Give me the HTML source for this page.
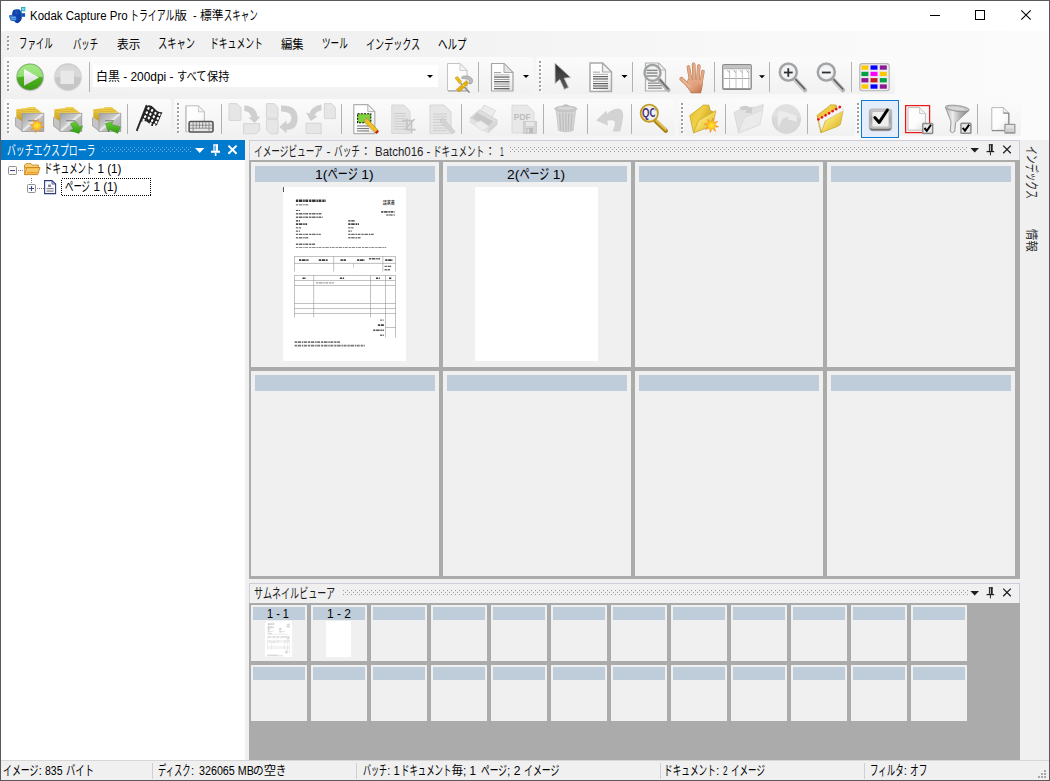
<!DOCTYPE html>
<html lang="ja"><head><meta charset="utf-8"><title>Kodak Capture Pro</title>
<style>
html,body{margin:0;padding:0}
body{width:1050px;height:781px;overflow:hidden;background:#f0f0f0;font-family:"Liberation Sans","Noto Sans CJK JP",sans-serif;font-size:12px;position:relative}
#win{position:absolute;left:0;top:0;width:1050px;height:781px;overflow:hidden;background:#f0f0f0}
#win div,#win svg{position:absolute}
.t{white-space:nowrap;height:40px;line-height:40px;transform-origin:0 0}
#frame{left:0;top:0;width:1048px;height:779px;border:1px solid #5a5a5e;pointer-events:none}
#title{left:1px;top:1px;width:1048px;height:30px;background:#fff}
#dock{left:1px;top:31px;width:1048px;height:109px;background:linear-gradient(to right,#f0f0f0 0,#f1f1f1 35%,#f9f9f9 75%,#fbfbfb 100%)}
.band{background:linear-gradient(to bottom,#fbfbfb 0,#f7f7f7 45%,#f1f1f1 100%);border-radius:3px}
.grip{width:3px;height:31px;background-image:linear-gradient(to bottom,#a0a0a0 0,#a0a0a0 2px,transparent 2px,transparent 4px),linear-gradient(to bottom,#fff 0,#fff 2px,transparent 2px,transparent 4px);background-size:2px 4px,2px 4px;background-position:0 0,1px 1px;background-repeat:repeat-y,repeat-y}
.sep{width:1px;height:29px;background:#b4b4b4}
.dd{width:0;height:0;border-left:3px solid transparent;border-right:3px solid transparent;border-top:3px solid #000}
#combo{left:93px;top:65px;width:345px;height:22px;background:#fff}
#lhead{left:1px;top:140px;width:244px;height:20px;background:#007acc}
#tree{left:1px;top:160px;width:244px;height:600px;background:#fff}
.phead{background:#f0f0f0;border:1px solid #cccedb;border-bottom:none;box-sizing:border-box}
.dots{height:5px;background-image:radial-gradient(circle at 0.5px 0.5px,#9a9a9a 0.6px,transparent 0.7px),radial-gradient(circle at 0.5px 0.5px,#9a9a9a 0.6px,transparent 0.7px);background-size:4px 4px,4px 4px;background-position:0 0,2px 2px}
#grid{left:249px;top:160px;width:771px;height:419px;background:#ababab}
.cell{width:188px;height:205px;background:#f0f0f0}
.cell i{position:absolute;left:4px;top:4px;width:180px;height:16px;background:#bfcddb}
#thumbs{left:249px;top:603px;width:771px;height:157px;background:#ababab}
.th{width:56px;height:56px;background:#f0f0f0}
.th i{position:absolute;left:2px;top:2px;width:52px;height:13px;background:#bfcddb}
#status{left:1px;top:760px;width:1048px;height:20px;background:#f0f0f0;border-top:1px solid #d7d7d7;box-sizing:border-box}
.ssep{width:1px;height:16px;top:763px;background:#d0d0d0}
.page{background:#fff}
.k{display:inline-block;transform-origin:0 50%;white-space:nowrap;position:static}
.dw{background-image:radial-gradient(circle at 0.5px 0.5px,#6fb4e6 0.6px,transparent 0.7px),radial-gradient(circle at 0.5px 0.5px,#6fb4e6 0.6px,transparent 0.7px)}

</style></head>
<body>
<div id="win">
<div id="title"></div>
<div id="dock"></div>
<!-- toolbar bands -->
<div class="band" style="left:4px;top:57px;width:529px;height:37px"></div>
<div class="band" style="left:536px;top:57px;width:359px;height:37px"></div>
<div class="band" style="left:4px;top:99px;width:167px;height:37px"></div>
<div class="band" style="left:174px;top:99px;width:501px;height:37px"></div>
<div class="band" style="left:678px;top:99px;width:177px;height:37px"></div>
<div class="band" style="left:857px;top:99px;width:164px;height:37px"></div>
<!-- grips -->
<div class="grip" style="left:7px;top:36px;height:15px"></div>
<div class="grip" style="left:7px;top:61px"></div>
<div class="grip" style="left:539px;top:61px"></div>
<div class="grip" style="left:7px;top:103px"></div>
<div class="grip" style="left:177px;top:103px"></div>
<div class="grip" style="left:681px;top:103px"></div>
<div class="grip" style="left:857px;top:103px"></div>
<div id="combo"></div>
<div class="dd" style="left:427px;top:75px"></div>
<!-- left panel -->
<div id="lhead"></div>
<div class="dots dw" style="left:102px;top:147px;width:90px"></div>
<div id="tree"></div>
<!-- image viewer -->
<div class="phead" style="left:249px;top:140px;width:771px;height:20px"></div>
<div class="dots" style="left:510px;top:147px;width:458px"></div>
<div id="grid">
<div class="cell" style="left:2px;top:2px"><i></i></div>
<div class="cell" style="left:194px;top:2px"><i></i></div>
<div class="cell" style="left:386px;top:2px"><i></i></div>
<div class="cell" style="left:578px;top:2px"><i></i></div>
<div class="cell" style="left:2px;top:211px"><i></i></div>
<div class="cell" style="left:194px;top:211px"><i></i></div>
<div class="cell" style="left:386px;top:211px"><i></i></div>
<div class="cell" style="left:578px;top:211px"><i></i></div>
</div>
<div class="page" style="left:283px;top:187px;width:123px;height:174px"></div>
<div class="page" style="left:475px;top:187px;width:123px;height:174px"></div>
<!-- thumbnails -->
<div class="phead" style="left:249px;top:583px;width:771px;height:20px"></div>
<div class="dots" style="left:343px;top:590px;width:625px"></div>
<div id="thumbs">
<div class="th" style="left:2px;top:2px"><i></i></div>
<div class="th" style="left:62px;top:2px"><i></i></div>
<div class="th" style="left:122px;top:2px"><i></i></div>
<div class="th" style="left:182px;top:2px"><i></i></div>
<div class="th" style="left:242px;top:2px"><i></i></div>
<div class="th" style="left:302px;top:2px"><i></i></div>
<div class="th" style="left:362px;top:2px"><i></i></div>
<div class="th" style="left:422px;top:2px"><i></i></div>
<div class="th" style="left:482px;top:2px"><i></i></div>
<div class="th" style="left:542px;top:2px"><i></i></div>
<div class="th" style="left:602px;top:2px"><i></i></div>
<div class="th" style="left:662px;top:2px"><i></i></div>
<div class="th" style="left:2px;top:62px"><i></i></div>
<div class="th" style="left:62px;top:62px"><i></i></div>
<div class="th" style="left:122px;top:62px"><i></i></div>
<div class="th" style="left:182px;top:62px"><i></i></div>
<div class="th" style="left:242px;top:62px"><i></i></div>
<div class="th" style="left:302px;top:62px"><i></i></div>
<div class="th" style="left:362px;top:62px"><i></i></div>
<div class="th" style="left:422px;top:62px"><i></i></div>
<div class="th" style="left:482px;top:62px"><i></i></div>
<div class="th" style="left:542px;top:62px"><i></i></div>
<div class="th" style="left:602px;top:62px"><i></i></div>
<div class="th" style="left:662px;top:62px"><i></i></div>
</div>
<div class="page" style="left:265px;top:621px;width:27px;height:36px"></div>
<div class="page" style="left:326px;top:621px;width:25px;height:36px"></div>
<!-- status -->
<div id="status"></div>
<div class="ssep" style="left:152px"></div>
<div class="ssep" style="left:356px"></div>
<div class="ssep" style="left:660px"></div>
<div class="ssep" style="left:864px"></div>
<svg id="ico" width="1050" height="781" viewBox="0 0 1050 781" style="left:0;top:0">
<defs>
<linearGradient id="gPage" x1="0" y1="0" x2="1" y2="1"><stop offset="0" stop-color="#fff"/><stop offset="0.6" stop-color="#fcfcfc"/><stop offset="1" stop-color="#dedede"/></linearGradient>
<linearGradient id="gPageD" x1="0" y1="0" x2="1" y2="1"><stop offset="0" stop-color="#ececec"/><stop offset="1" stop-color="#e0e0e0"/></linearGradient>
<linearGradient id="gGreenT" x1="0" y1="0" x2="0" y2="1"><stop offset="0" stop-color="#a6e88c"/><stop offset="1" stop-color="#8fe070"/></linearGradient>
<linearGradient id="gGreenB" x1="0" y1="0" x2="0" y2="1"><stop offset="0" stop-color="#5cc428"/><stop offset="0.5" stop-color="#4db41e"/><stop offset="1" stop-color="#3c9a14"/></linearGradient>
<linearGradient id="gTri" x1="0" y1="0" x2="0" y2="1"><stop offset="0" stop-color="#fff"/><stop offset="1" stop-color="#d4d4d4"/></linearGradient>
<linearGradient id="gStop" x1="0" y1="0" x2="0" y2="1"><stop offset="0" stop-color="#d9d9d9"/><stop offset="0.5" stop-color="#d2d2d2"/><stop offset="0.52" stop-color="#c2c2c2"/><stop offset="1" stop-color="#cbcbcb"/></linearGradient>
<linearGradient id="gCur" x1="0" y1="0" x2="0" y2="1"><stop offset="0" stop-color="#2e2e2e"/><stop offset="1" stop-color="#5c5c5c"/></linearGradient>
<linearGradient id="gFront" x1="0" y1="0" x2="1" y2="1"><stop offset="0" stop-color="#a0a0a0"/><stop offset="0.42" stop-color="#c8c8c8"/><stop offset="0.5" stop-color="#efefef"/><stop offset="0.56" stop-color="#c0c0c0"/><stop offset="1" stop-color="#a8a8a8"/></linearGradient>
<linearGradient id="gYel" x1="0" y1="0" x2="0" y2="1"><stop offset="0" stop-color="#f0cc48"/><stop offset="1" stop-color="#c89a18"/></linearGradient>
<linearGradient id="gFold" x1="0" y1="0" x2="1" y2="1"><stop offset="0" stop-color="#fbf2a8"/><stop offset="0.45" stop-color="#f4dc60"/><stop offset="1" stop-color="#d2a41a"/></linearGradient>
<linearGradient id="gGArr" x1="0" y1="0" x2="0" y2="1"><stop offset="0" stop-color="#6ad038"/><stop offset="1" stop-color="#2e9a10"/></linearGradient>
<radialGradient id="gStar"><stop offset="0" stop-color="#ffe838"/><stop offset="0.55" stop-color="#ffc218"/><stop offset="1" stop-color="#f07818"/></radialGradient>
<linearGradient id="gGrayBtn" x1="0" y1="0" x2="0" y2="1"><stop offset="0" stop-color="#c8c8c8"/><stop offset="0.5" stop-color="#a0a0a0"/><stop offset="1" stop-color="#c4c4c4"/></linearGradient>
<linearGradient id="gHand" x1="0" y1="0" x2="1" y2="1"><stop offset="0" stop-color="#e8b08c"/><stop offset="0.5" stop-color="#e0a07c"/><stop offset="1" stop-color="#c07048"/></linearGradient>
<linearGradient id="gFunnel" x1="0" y1="0" x2="1" y2="0"><stop offset="0" stop-color="#b4b4b4"/><stop offset="0.3" stop-color="#ececec"/><stop offset="0.6" stop-color="#b4b4b4"/><stop offset="1" stop-color="#848484"/></linearGradient>
<radialGradient id="gLens"><stop offset="0" stop-color="#f8f8f8"/><stop offset="0.7" stop-color="#f0f2f3"/><stop offset="1" stop-color="#d2e2ea"/></radialGradient>
<linearGradient id="gFoldB" x1="0" y1="0" x2="1" y2="0.6"><stop offset="0" stop-color="#e4bc30"/><stop offset="0.45" stop-color="#f0d048"/><stop offset="1" stop-color="#c49814"/></linearGradient>
<linearGradient id="gGold" x1="0" y1="0" x2="1" y2="1"><stop offset="0" stop-color="#e8c850"/><stop offset="1" stop-color="#a87c10"/></linearGradient>
</defs>
<g><path d="M13.4 10 Q16.5 8.6 19.6 9.6 Q21.6 11.4 21.8 14 L21.8 18.6 Q20.6 22.4 17.6 23.2 Q15.4 23 14.4 21.2 L10.8 20.6 Q9.4 18 9.2 15.6 L12 15 Q12 12 13.4 10 Z" fill="#0e41a8"/><path d="M9.2 15.4 Q12.4 14.8 15.6 16.4 L16.6 18.4 L15.6 20.8 L10.6 20.2 Q9.6 18 9.2 15.4 Z" fill="#2d74cb"/><rect x="10.6" y="16.8" width="5.4" height="0.9" fill="#86bcf0"/><rect x="10.4" y="18.8" width="5.8" height="0.9" fill="#74aeea"/><path d="M14.6 11 Q17 10 18.6 11.6 L17.8 14.6 L15.2 14.2 Z" fill="#1c52b8"/><rect x="21.6" y="13.2" width="3.5" height="3.6" fill="#1252b6"/><rect x="21.5" y="7.4" width="3.4" height="3.4" fill="#6fdcff" stroke="#27a5a9" stroke-width="0.9"/><path d="M21.5 11 L20.7 13" stroke="#27a5a9" stroke-width="0.8"/></g>
<rect x="930" y="15" width="10" height="1" fill="#000"/>
<rect x="975.5" y="10.5" width="9" height="9" fill="none" stroke="#000" stroke-width="1"/>
<path d="M1021.3 10.3 L1030.7 19.7 M1030.7 10.3 L1021.3 19.7" stroke="#000" stroke-width="1.1" fill="none"/>
<g><circle cx="30.2" cy="77.5" r="14" fill="#c4c4c4" opacity="0.5"/><circle cx="30" cy="77" r="13.6" fill="#9ca29c"/><circle cx="30" cy="77" r="12.9" fill="url(#gGreenB)"/><path d="M17.1 77.3 A12.9 12.9 0 0 1 42.9 77.3 Q30 75.2 17.1 77.3 Z" fill="url(#gGreenT)"/><path d="M24 69 L39 77.4 L24 85.8 Z" fill="url(#gTri)"/></g>
<g><circle cx="68" cy="77.2" r="14.2" fill="#dedede"/><circle cx="68" cy="77" r="13.2" fill="#c6c6c6"/><path d="M54.8 77.6 A13.2 13.2 0 0 1 81.2 77.6 Q68 75.4 54.8 77.6 Z" fill="#d8d8d8"/><rect x="60.4" y="70.6" width="13.6" height="13.4" fill="#e8e8e8"/></g>
<rect x="89" y="62" width="1" height="30" fill="#b2b2b2"/>
<path d="M447.5 63.5 L460.0 63.5 L467.0 70.5 L467.0 90.5 L447.5 90.5 Z" fill="url(#gPage)" stroke="#c4c4c4" stroke-width="1" stroke-linejoin="round"/>
<path d="M460.0 63.5 L460.0 70.5 L467.0 70.5 Z" fill="#f4f4f4" stroke="#c4c4c4" stroke-width="0.8" stroke-linejoin="round"/>
<path d="M448 91 L467.5 91" stroke="#a8a8a8" stroke-width="1.2"/>
<g><path d="M461.4 78.2 L462.6 76.2 L468 76 Q472.6 77.4 472.8 81.4 L471 84 L469 83.4 L469.6 80.6 L467.6 79 Z" fill="#bcbcbc" stroke="#8e8e8e" stroke-width="0.6"/><path d="M461 83.6 L469.2 92.2" stroke="#8c8c8c" stroke-width="1.5" stroke-linecap="round"/><path d="M455 78 L457.4 76.4 L461.6 81.6 L459.4 83.6 Z" fill="#ecbc0c" stroke="#b88a00" stroke-width="0.5"/><path d="M466.4 80.8 L468.6 83.2 L459.2 92 L456.6 89.4 Z" fill="#e4b208" stroke="#b08400" stroke-width="0.5"/><path d="M462.6 84.6 L464.6 86.6" stroke="#f8e070" stroke-width="1"/></g>
<rect x="478" y="62" width="1" height="30" fill="#b2b2b2"/>
<path d="M491.5 63.5 L504.0 63.5 L513.0 72.5 L513.0 91.0 L491.5 91.0 Z" fill="url(#gPage)" stroke="#a4a4a4" stroke-width="1.2" stroke-linejoin="round"/>
<path d="M504.0 63.5 L504.0 72.5 L513.0 72.5 Z" fill="#e4e4e4" stroke="#a4a4a4" stroke-width="0.96" stroke-linejoin="round"/>
<rect x="494" y="72" width="7" height="1.1" fill="#a4a4a4"/>
<rect x="494" y="74.3" width="15.5" height="1.1" fill="#bcbcbc"/>
<rect x="494" y="76.5" width="15.5" height="1.1" fill="#444"/>
<rect x="494" y="78.9" width="15.5" height="1.1" fill="#9a9a9a"/>
<rect x="494" y="81.2" width="15.5" height="1.1" fill="#444"/>
<rect x="494" y="83.5" width="15.5" height="1.1" fill="#9a9a9a"/>
<rect x="494" y="85.8" width="15.5" height="1.1" fill="#8c8c8c"/>
<rect x="494" y="88.2" width="15.5" height="1.1" fill="#444"/>
<path d="M523 75 L529 75 L526 78 Z" fill="#000"/>
<path d="M555 63 L555 83.6 L559.8 79.6 L564.3 89.4 L568.6 87.4 L564.2 78.2 L570.8 77.6 Z" fill="url(#gCur)" stroke="#c8c8c8" stroke-width="0.9" stroke-linejoin="round"/>
<path d="M590 63 L602.5 63 L611.5 72 L611.5 91.5 L590 91.5 Z" fill="url(#gPage)" stroke="#aaaaaa" stroke-width="1.5" stroke-linejoin="round"/>
<path d="M602.5 63 L602.5 72 L611.5 72 Z" fill="#f2f2f2" stroke="#aaaaaa" stroke-width="1.2000000000000002" stroke-linejoin="round"/>
<rect x="593" y="71.6" width="7" height="1.1" fill="#b0b0b0"/>
<rect x="593" y="73.8" width="15" height="1.1" fill="#b4b4b4"/>
<rect x="593" y="76.1" width="15" height="1.1" fill="#555"/>
<rect x="593" y="78.4" width="15" height="1.1" fill="#505050"/>
<rect x="593" y="80.8" width="15" height="1.1" fill="#a8a8a8"/>
<rect x="593" y="83.1" width="15" height="1.1" fill="#505050"/>
<rect x="593" y="85.4" width="15" height="1.1" fill="#555"/>
<rect x="593" y="87.7" width="15" height="1.1" fill="#505050"/>
<path d="M621.5 75 L627.5 75 L624.5 78 Z" fill="#000"/>
<rect x="632" y="62" width="1" height="30" fill="#b2b2b2"/>
<path d="M645.5 63 L658.5 63 L665.5 70 L665.5 91 L645.5 91 Z" fill="#f6f6f6" stroke="#b0b0b0" stroke-width="1.2" stroke-linejoin="round"/>
<path d="M658.5 63 L658.5 70 L665.5 70 Z" fill="#f4f4f4" stroke="#b0b0b0" stroke-width="0.96" stroke-linejoin="round"/>
<rect x="648" y="82.5" width="14" height="1.3" fill="#8c8c8c"/>
<rect x="648" y="85" width="14" height="1.3" fill="#8c8c8c"/>
<rect x="648" y="87.5" width="14" height="1.3" fill="#8c8c8c"/>
<path d="M659 79.6 L668.4 90" stroke="#b4b4b4" stroke-width="4.4" stroke-linecap="round"/>
<path d="M660 79.8 L668.2 89" stroke="#6a6a6a" stroke-width="1.5" stroke-linecap="round"/>
<circle cx="652.5" cy="72.8" r="9.6" fill="#d0d0d0" opacity="0.5"/>
<circle cx="652.5" cy="72.8" r="8" fill="url(#gLens)" stroke="#a0a0a0" stroke-width="2.2"/>
<rect x="646.5" y="69.6" width="11" height="1.5" fill="#8a8a8a"/>
<rect x="646.5" y="72.3" width="11" height="1.5" fill="#8a8a8a"/>
<rect x="646.5" y="75.2" width="11" height="1.5" fill="#8a8a8a"/>
<path d="M688.4 79.4 L702 80 Q702.8 84.6 700.6 92.6 L691.2 92.6 Q689 88.6 686.6 86 Z" fill="none" stroke="#b47654" stroke-width="1.1" stroke-linejoin="round"/>
<path d="M690.8 81 L688.4 67" stroke="#b47654" stroke-width="3.5" stroke-linecap="round"/>
<path d="M694.2 80 L693.6 64.2" stroke="#b47654" stroke-width="3.6" stroke-linecap="round"/>
<path d="M697.8 80.6 L698.8 66" stroke="#b47654" stroke-width="3.5" stroke-linecap="round"/>
<path d="M701 83 L703 71.4" stroke="#b47654" stroke-width="3.3" stroke-linecap="round"/>
<path d="M689.6 86.6 L681.4 78.8" stroke="#b47654" stroke-width="3.9" stroke-linecap="round"/>
<path d="M688.4 79.4 L702 80 Q702.8 84.6 700.6 92.6 L691.2 92.6 Q689 88.6 686.6 86 Z" fill="url(#gHand)"/>
<path d="M690.8 81 L688.4 67" stroke="#e4a884" stroke-width="2.6" stroke-linecap="round"/>
<path d="M694.2 80 L693.6 64.2" stroke="#e4a884" stroke-width="2.7" stroke-linecap="round"/>
<path d="M697.8 80.6 L698.8 66" stroke="#e4a884" stroke-width="2.6" stroke-linecap="round"/>
<path d="M701 83 L703 71.4" stroke="#e4a884" stroke-width="2.4" stroke-linecap="round"/>
<path d="M689.6 86.6 L681.4 78.8" stroke="#e4a884" stroke-width="3.0" stroke-linecap="round"/>
<path d="M689.6 86.6 L683 80" stroke="#eab692" stroke-width="1.6" stroke-linecap="round"/>
<rect x="714" y="62" width="1" height="30" fill="#b2b2b2"/>
<rect x="722.8" y="64.6" width="28.4" height="24.6" rx="1.2" fill="#fff" stroke="#8a8a8a" stroke-width="1.4"/>
<rect x="723.5" y="65.3" width="27" height="4" fill="#b4b4b4"/>
<rect x="723.5" y="66.4" width="27" height="1.2" fill="#cfcfcf"/>
<rect x="723.5" y="88" width="27" height="1" fill="#9a9a9a"/>
<rect x="724" y="78" width="26" height="0.9" fill="#a0a0a0"/>
<path d="M729.6 70 L729.6 88" stroke="#c4c4c4" stroke-width="1"/>
<path d="M727.2 70.3 L729.2 72.6" stroke="#9a9a9a" stroke-width="0.9"/>
<path d="M736 70 L736 88" stroke="#c4c4c4" stroke-width="1"/>
<path d="M733.6 70.3 L735.6 72.6" stroke="#9a9a9a" stroke-width="0.9"/>
<path d="M742.4 70 L742.4 88" stroke="#c4c4c4" stroke-width="1"/>
<path d="M740.0 70.3 L742.0 72.6" stroke="#9a9a9a" stroke-width="0.9"/>
<path d="M748.8 70 L748.8 88" stroke="#c4c4c4" stroke-width="1"/>
<path d="M746.4 70.3 L748.4 72.6" stroke="#9a9a9a" stroke-width="0.9"/>
<path d="M759 75.2 L765 75.2 L762 78.2 Z" fill="#000"/>
<rect x="769" y="62" width="1" height="30" fill="#b2b2b2"/>
<path d="M794.6999999999999 79.2 L804.9 90" stroke="#b6b6b6" stroke-width="4.6" stroke-linecap="round"/>
<path d="M795.6999999999999 79.4 L804.6999999999999 89" stroke="#5e5e5e" stroke-width="1.5" stroke-linecap="round"/>
<path d="M794.0999999999999 80.4 L803.0999999999999 90" stroke="#e4e4e4" stroke-width="0.9" stroke-linecap="round"/>
<circle cx="788.3" cy="72.1" r="10.1" fill="#d4d4d4" opacity="0.55"/>
<circle cx="788.3" cy="72.1" r="8.5" fill="url(#gLens)" stroke="#a2a2a2" stroke-width="2.3"/>
<path d="M783.9 72.5 L792.6999999999999 72.5" stroke="#2e2e2e" stroke-width="1.8"/>
<path d="M788.3 68.2 L788.3 76.8" stroke="#2e2e2e" stroke-width="1.8"/>
<path d="M832.6999999999999 79.2 L842.9 90" stroke="#b6b6b6" stroke-width="4.6" stroke-linecap="round"/>
<path d="M833.6999999999999 79.4 L842.6999999999999 89" stroke="#5e5e5e" stroke-width="1.5" stroke-linecap="round"/>
<path d="M832.0999999999999 80.4 L841.0999999999999 90" stroke="#e4e4e4" stroke-width="0.9" stroke-linecap="round"/>
<circle cx="826.3" cy="72.1" r="10.1" fill="#d4d4d4" opacity="0.55"/>
<circle cx="826.3" cy="72.1" r="8.5" fill="url(#gLens)" stroke="#a2a2a2" stroke-width="2.3"/>
<path d="M821.9 72.5 L830.6999999999999 72.5" stroke="#2e2e2e" stroke-width="1.8"/>
<rect x="851" y="62" width="1" height="30" fill="#b2b2b2"/>
<rect x="859.8" y="63.6" width="29.4" height="27.2" rx="2.5" fill="#ececec" stroke="#b2b2b2" stroke-width="1.1"/>
<rect x="861.4" y="65.4" width="7" height="4.3" fill="#ffc800"/>
<rect x="870.5" y="65.4" width="7" height="4.3" fill="#0000ff"/>
<rect x="879.8" y="65.4" width="7" height="4.3" fill="#8c1a96"/>
<rect x="861.4" y="71.8" width="7" height="4.3" fill="#00a048"/>
<rect x="870.5" y="71.8" width="7" height="4.3" fill="#ff00ff"/>
<rect x="879.8" y="71.8" width="7" height="4.3" fill="#ffc800"/>
<rect x="861.4" y="78.1" width="7" height="4.3" fill="#8c1a96"/>
<rect x="870.5" y="78.1" width="7" height="4.3" fill="#c41e1e"/>
<rect x="879.8" y="78.1" width="7" height="4.3" fill="#00a048"/>
<rect x="861.4" y="84.4" width="7" height="4.3" fill="#ffc800"/>
<rect x="870.5" y="84.4" width="7" height="4.3" fill="#0000ff"/>
<rect x="879.8" y="84.4" width="7" height="4.3" fill="#8c1a96"/>
<g transform="translate(15,107)"><path d="M0 10 L7 14 L7 24.5 L0 19 Z" fill="#acacac"/><path d="M1 10.3 L7 13.8 L7 23 L1 18.4 Z" fill="#c4c4c4"/><path d="M1.3 2.2 L12 1.2 L13 0 L19.5 0 L21 1.2 L27 6 L7.2 7 L7.2 14.5 L1.3 10.6 Z" fill="url(#gYel)"/><path d="M1.3 2.2 L12 1.2 L13 0 L19.5 0 L21 1.2 L27 6 L7.2 7 Z" fill="#f0d050"/><path d="M3 3.4 L21 2.2 M5 5 L24 4" stroke="#d4a828" stroke-width="0.7" fill="none"/><rect x="7" y="6.3" width="21.8" height="18.2" fill="url(#gFront)" stroke="#9c9c9c" stroke-width="0.8"/><rect x="13" y="13.3" width="9" height="1.3" fill="#787878"/><rect x="13" y="14.6" width="9" height="0.8" fill="#f0f0f0"/></g>
<polygon points="43.9,127.2 39.6,127.7 40.8,131.8 37.5,129.1 35.4,132.9 34.9,128.6 30.8,129.8 33.5,126.5 29.7,124.4 34.0,123.9 32.8,119.8 36.1,122.5 38.2,118.7 38.7,123.0 42.8,121.8 40.1,125.1" fill="url(#gStar)" stroke="#f08820" stroke-width="0.4"/>
<g transform="translate(53,107)"><path d="M0 10 L7 14 L7 24.5 L0 19 Z" fill="#acacac"/><path d="M1 10.3 L7 13.8 L7 23 L1 18.4 Z" fill="#c4c4c4"/><path d="M1.3 2.2 L12 1.2 L13 0 L19.5 0 L21 1.2 L27 6 L7.2 7 L7.2 14.5 L1.3 10.6 Z" fill="url(#gYel)"/><path d="M1.3 2.2 L12 1.2 L13 0 L19.5 0 L21 1.2 L27 6 L7.2 7 Z" fill="#f0d050"/><path d="M3 3.4 L21 2.2 M5 5 L24 4" stroke="#d4a828" stroke-width="0.7" fill="none"/><rect x="7" y="6.3" width="21.8" height="18.2" fill="url(#gFront)" stroke="#9c9c9c" stroke-width="0.8"/><rect x="13" y="13.3" width="9" height="1.3" fill="#787878"/><rect x="13" y="14.6" width="9" height="0.8" fill="#f0f0f0"/></g>
<path d="M70.5 123.5 L76 121.5 L79.5 127 L82.8 125.8 L79 133.5 L69.5 130.6 L73.4 129.2 Z" fill="url(#gGArr)" stroke="#2c8a10" stroke-width="0.4"/>
<g transform="translate(92,107)"><path d="M0 10 L7 14 L7 24.5 L0 19 Z" fill="#acacac"/><path d="M1 10.3 L7 13.8 L7 23 L1 18.4 Z" fill="#c4c4c4"/><path d="M1.3 2.2 L12 1.2 L13 0 L19.5 0 L21 1.2 L27 6 L7.2 7 L7.2 14.5 L1.3 10.6 Z" fill="url(#gYel)"/><path d="M1.3 2.2 L12 1.2 L13 0 L19.5 0 L21 1.2 L27 6 L7.2 7 Z" fill="#f0d050"/><path d="M3 3.4 L21 2.2 M5 5 L24 4" stroke="#d4a828" stroke-width="0.7" fill="none"/><rect x="7" y="6.3" width="21.8" height="18.2" fill="url(#gFront)" stroke="#9c9c9c" stroke-width="0.8"/><rect x="13" y="13.3" width="9" height="1.3" fill="#787878"/><rect x="13" y="14.6" width="9" height="0.8" fill="#f0f0f0"/></g>
<path d="M105.4 123.6 L113.2 121.6 L111.6 124.4 L120.4 127 L117.6 133.4 L110.2 129.4 L108.4 132 Z" fill="url(#gGArr)" stroke="#2c8a10" stroke-width="0.4"/>
<rect x="127" y="104" width="1" height="30" fill="#b2b2b2"/>
<path d="M146.4 105.8 L137 130.2" stroke="#2a2a2a" stroke-width="1.9" stroke-linecap="round"/>
<path d="M146.4 106.2 Q150.6 103.8 154 108 Q157.6 112.6 162.4 112.2 L157 125 Q152.6 127.8 149 123.4 Q145.4 119.4 140.6 122 Z" fill="#262626"/>
<ellipse cx="148.4" cy="108.4" rx="1.15" ry="1.45" transform="rotate(25 148.4 108.4)" fill="#fff"/>
<ellipse cx="152" cy="110.4" rx="1.15" ry="1.45" transform="rotate(25 152 110.4)" fill="#fff"/>
<ellipse cx="155.4" cy="113.2" rx="1.15" ry="1.45" transform="rotate(25 155.4 113.2)" fill="#fff"/>
<ellipse cx="159.4" cy="114.6" rx="1.15" ry="1.45" transform="rotate(25 159.4 114.6)" fill="#fff"/>
<ellipse cx="146.8" cy="112.6" rx="1.15" ry="1.45" transform="rotate(25 146.8 112.6)" fill="#fff"/>
<ellipse cx="150.4" cy="114.2" rx="1.15" ry="1.45" transform="rotate(25 150.4 114.2)" fill="#fff"/>
<ellipse cx="153.8" cy="116.8" rx="1.15" ry="1.45" transform="rotate(25 153.8 116.8)" fill="#fff"/>
<ellipse cx="157.8" cy="118.4" rx="1.15" ry="1.45" transform="rotate(25 157.8 118.4)" fill="#fff"/>
<ellipse cx="145.2" cy="116.6" rx="1.15" ry="1.45" transform="rotate(25 145.2 116.6)" fill="#fff"/>
<ellipse cx="148.8" cy="118" rx="1.15" ry="1.45" transform="rotate(25 148.8 118)" fill="#fff"/>
<ellipse cx="152.2" cy="120.6" rx="1.15" ry="1.45" transform="rotate(25 152.2 120.6)" fill="#fff"/>
<ellipse cx="156.2" cy="122.2" rx="1.15" ry="1.45" transform="rotate(25 156.2 122.2)" fill="#fff"/>
<ellipse cx="143.6" cy="120" rx="1.15" ry="1.45" transform="rotate(25 143.6 120)" fill="#fff"/>
<ellipse cx="150.6" cy="123.6" rx="1.15" ry="1.45" transform="rotate(25 150.6 123.6)" fill="#fff"/>
<ellipse cx="154.2" cy="125" rx="1.15" ry="1.45" transform="rotate(25 154.2 125)" fill="#fff"/>
<path d="M185.8 105.8 L198.4 105.8 L204.4 111.8 L204.4 131.8 L185.8 131.8 Z" fill="url(#gPage)" stroke="#bcbcbc" stroke-width="1" stroke-linejoin="round"/>
<path d="M198.4 105.8 L198.4 111.8 L204.4 111.8 Z" fill="#f4f4f4" stroke="#bcbcbc" stroke-width="0.8" stroke-linejoin="round"/>
<path d="M186 106.4 L186 131.6" stroke="#c8c8c8" stroke-width="1.4"/>
<rect x="188.3" y="120.7" width="25.5" height="12" rx="2.2" fill="#555"/>
<rect x="189.9" y="122.2" width="22.3" height="9" rx="0.8" fill="#e6e6e6"/>
<path d="M193.09 122.2 L193.09 128.2" stroke="#707070" stroke-width="0.7"/>
<path d="M196.28 122.2 L196.28 128.2" stroke="#707070" stroke-width="0.7"/>
<path d="M199.47 122.2 L199.47 128.2" stroke="#707070" stroke-width="0.7"/>
<path d="M202.66 122.2 L202.66 128.2" stroke="#707070" stroke-width="0.7"/>
<path d="M205.85 122.2 L205.85 128.2" stroke="#707070" stroke-width="0.7"/>
<path d="M209.04 122.2 L209.04 128.2" stroke="#707070" stroke-width="0.7"/>
<path d="M193.1 128.2 L193.1 131.2 M209 128.2 L209 131.2" stroke="#707070" stroke-width="0.7"/>
<path d="M189.9 125.2 L212.2 125.2 M189.9 128.2 L212.2 128.2" stroke="#707070" stroke-width="0.7"/>
<rect x="221" y="104" width="1" height="30" fill="#b2b2b2"/>
<path d="M229 103.6 L237 103.6 L241 107.6 L241 120.4 L229 120.4 Z" fill="#e6e6e6" stroke="#d6d6d6" stroke-width="1"/>
<path d="M244.4 105.2 Q256.4 106.4 257.6 116.6 L260.4 116.4 L254.6 123 L248.4 117.4 L251.4 117.2 Q250 111.6 244.2 111 Z" fill="#cfcfcf"/>
<path d="M243.6 123.6 L259.6 123.6 L259.6 130 L256 133.8 L243.6 133.8 Z" fill="#e6e6e6" stroke="#d6d6d6" stroke-width="1"/>
<path d="M266.4 103.6 L274 103.6 L278 107.6 L278 118.2 L266.4 118.2 Z" fill="#e6e6e6" stroke="#d6d6d6" stroke-width="1"/>
<path d="M266.4 119.4 L278 119.4 L278 133.8 L270.4 133.8 L266.4 130 Z" fill="#e6e6e6" stroke="#d6d6d6" stroke-width="1"/>
<path d="M281 105.4 Q297.6 105 297.6 118.4 Q297.6 129.6 286.6 129.8 L286.4 133.2 L279.4 127 L286.4 120.4 L286.6 124 Q291.4 123.4 291.4 117.6 Q291.4 111.6 281 111.6 Z" fill="#cfcfcf"/>
<path d="M324.4 103.6 L331.6 103.6 L335.4 107.4 L335.4 118.6 L324.4 118.6 Z" fill="#e6e6e6" stroke="#d6d6d6" stroke-width="1"/>
<path d="M321.4 104.6 Q311.4 106.4 309.4 113.6 L306 112.6 L310.6 121 L317.6 116.4 L314.6 115.2 Q316.6 111 321.6 110.6 Z" fill="#cfcfcf"/>
<path d="M306 123.2 L321.2 123.2 L321.2 133.6 L306 133.6 Z" fill="#e6e6e6" stroke="#d6d6d6" stroke-width="1"/>
<rect x="341" y="104" width="1" height="30" fill="#b2b2b2"/>
<path d="M353.8 104.6 L367.8 104.6 L374.8 111.6 L374.8 133.6 L353.8 133.6 Z" fill="url(#gPage)" stroke="#aeaeae" stroke-width="1.2" stroke-linejoin="round"/>
<path d="M367.8 104.6 L367.8 111.6 L374.8 111.6 Z" fill="#f4f4f4" stroke="#aeaeae" stroke-width="0.96" stroke-linejoin="round"/>
<rect x="357" y="125.4" width="12" height="1.1" fill="#7c7c7c"/>
<rect x="357" y="128" width="12" height="1.1" fill="#7c7c7c"/>
<rect x="357" y="130.4" width="12" height="1.1" fill="#7c7c7c"/>
<rect x="357.6" y="113.8" width="13.2" height="9" fill="#7fd03c" stroke="#111" stroke-width="1.1" stroke-dasharray="2 1.2"/>
<path d="M364.6 119.6 L367.4 118.8 L377.6 129.8 L375 132.6 L365 122.6 Z" fill="#f0c020" stroke="#9c7a10" stroke-width="0.5"/>
<path d="M364.4 119.4 L367 119.2 L365.4 122.2 Z" fill="#e8a088"/>
<path d="M375 132.6 L377.6 129.8 L379 131.4 L376.6 134 Z" fill="#c82020"/>
<path d="M391.8 105 L404 105 L410 111 L410 133.4 L391.8 133.4 Z" fill="#e4e4e4" stroke="#d8d8d8" stroke-width="1"/>
<rect x="394" y="113" width="12" height="1" fill="#cdcdcd"/>
<rect x="394" y="115.6" width="12" height="1" fill="#cdcdcd"/>
<rect x="394" y="118.2" width="12" height="1" fill="#cdcdcd"/>
<rect x="394" y="120.8" width="12" height="1" fill="#cdcdcd"/>
<rect x="394" y="123.4" width="12" height="1" fill="#cdcdcd"/>
<rect x="394" y="126" width="12" height="1" fill="#cdcdcd"/>
<rect x="394" y="128.6" width="12" height="1" fill="#cdcdcd"/>
<path d="M402.6 120.6 L411.6 120.6 L411.6 133.6 M407 118.6 L407 129.6 L415.6 129.6 M414.6 119 L404.6 129.8" fill="none" stroke="#c4c4c4" stroke-width="1.6"/>
<path d="M430 105 L444 105 L451 112 L451 133.6 L430 133.6 Z" fill="#e6e6e6" stroke="#d6d6d6" stroke-width="1"/>
<rect x="433" y="113.6" width="14" height="1" fill="#cdcdcd"/>
<rect x="433" y="116.4" width="14" height="1" fill="#cdcdcd"/>
<rect x="433" y="119.2" width="14" height="1" fill="#cdcdcd"/>
<rect x="433" y="122" width="14" height="1" fill="#cdcdcd"/>
<rect x="433" y="124.8" width="14" height="1" fill="#cdcdcd"/>
<rect x="433" y="127.6" width="14" height="1" fill="#cdcdcd"/>
<rect x="433" y="130.2" width="14" height="1" fill="#cdcdcd"/>
<path d="M440.2 119.4 L443.4 118.4 L455 131.6 L452.6 134 L441 122.6 Z" fill="#d4d4d4" stroke="#c0c0c0" stroke-width="0.6"/>
<rect x="461" y="104" width="1" height="30" fill="#b2b2b2"/>
<path d="M484 105 L495.6 110.6 L491 118.6 L479.6 112.6 Z" fill="#ececec" stroke="#d6d6d6" stroke-width="0.8"/>
<path d="M470.4 117.6 L479.6 109.8 L497.4 120.2 L489 129.2 Z" fill="#dedede" stroke="#cfcfcf" stroke-width="0.8"/>
<path d="M477 112.4 L493.4 121.6 L487.6 127.6 L472.4 118 Z" fill="#c8c8c8"/>
<path d="M470.4 117.6 L489 129.2 L488.4 133 L470.2 122.4 Z" fill="#e4e4e4" stroke="#d2d2d2" stroke-width="0.6"/>
<path d="M489 129.2 L497.4 120.2 L497.6 124.6 L488.4 133 Z" fill="#d6d6d6"/>
<path d="M473 123.4 L480.6 120.6 L489.6 126.6 L482 130.8 Z" fill="#ededed" stroke="#d4d4d4" stroke-width="0.6"/>
<path d="M512 105.2 L527 105.2 L534 112 L534 133 L512 133 Z" fill="#e8e8e8" stroke="#dadada" stroke-width="1"/>
<text x="513.8" y="120.2" font-family="Liberation Sans,sans-serif" font-weight="bold" font-size="8.8" fill="#bdbdbd" textLength="17" lengthAdjust="spacingAndGlyphs">PDF</text>
<rect x="523.4" y="121.4" width="13" height="12" fill="#d4d4d4" stroke="#c6c6c6" stroke-width="0.8"/>
<rect x="526" y="121.8" width="8" height="4.2" fill="#e8e8e8"/><rect x="526.4" y="128" width="6.6" height="5" fill="#bcbcbc"/><rect x="527.4" y="129" width="1.6" height="3.4" fill="#e6e6e6"/>
<rect x="543" y="104" width="1" height="30" fill="#b2b2b2"/>
<path d="M562.2 107 Q565.8 103.4 569.4 107" fill="none" stroke="#c0c0c0" stroke-width="1.6"/>
<path d="M556.2 110.4 Q565.8 114 575.6 110.4 L573.2 130.4 Q565.8 133.4 558.6 130.4 Z" fill="#d6d6d6" stroke="#c4c4c4" stroke-width="0.8"/>
<path d="M559.6 113.4 L560.7 130.4" stroke="#bebebe" stroke-width="1.4"/>
<path d="M562.8 113.4 L563.3 130.4" stroke="#bebebe" stroke-width="1.4"/>
<path d="M565.8 113.4 L565.8 130.4" stroke="#bebebe" stroke-width="1.4"/>
<path d="M568.8 113.4 L568.3 130.4" stroke="#bebebe" stroke-width="1.4"/>
<path d="M572 113.4 L570.9 130.4" stroke="#bebebe" stroke-width="1.4"/>
<ellipse cx="565.8" cy="108.8" rx="11.2" ry="2.8" fill="#cacaca" stroke="#bcbcbc" stroke-width="0.8"/>
<ellipse cx="565.8" cy="108.2" rx="8" ry="1.3" fill="#dadada"/>
<rect x="587" y="104" width="1" height="30" fill="#b2b2b2"/>
<path d="M596 120.6 L606.6 110.6 L607 114 Q612 108.8 618 108.6 Q623.6 109.6 623.2 116 Q622.6 124 620 131.4 L612.4 131.4 Q616 124 614.4 121 Q612 119.6 607.4 120.8 L608 125.4 Z" fill="#d3d3d3"/>
<rect x="631" y="104" width="1" height="30" fill="#b2b2b2"/>
<path d="M655.6 121 L665.8 130.8" stroke="#a27c12" stroke-width="4.2" stroke-linecap="round"/>
<path d="M655.8 120.4 L665.6 129.8" stroke="#d8b23a" stroke-width="2.2" stroke-linecap="round"/>
<path d="M656.4 119.8 L665.8 128.8" stroke="#f0dc86" stroke-width="0.8" stroke-linecap="round"/>
<circle cx="649.3" cy="113.2" r="8.6" fill="url(#gLens)" stroke="#c09820" stroke-width="1.9"/>
<circle cx="649.3" cy="113.2" r="7.5" fill="none" stroke="#ecd67c" stroke-width="0.7"/>
<text x="642" y="117" font-family="Liberation Sans,sans-serif" font-weight="bold" font-size="12" fill="#45307e" textLength="14.4" lengthAdjust="spacingAndGlyphs">QC</text>
<path d="M654.2 108.6 Q657 112.6 655.2 117.6" stroke="#e4eef4" stroke-width="1.6" fill="none" opacity="0.85"/>
<g transform="translate(689.5,105)"><path d="M0.2 10.6 L12 1.6 L13.6 0 L19.4 0.2 L20.8 5.6 L24.4 7 L22.4 20 L4 27.8 Z" fill="url(#gFoldB)" stroke="#b89414" stroke-width="0.6" stroke-linejoin="round"/><path d="M4 27.8 L9 15.6 L26.4 5.6 L23.6 19.6 L20 22 Z" fill="url(#gFold)" stroke="#c8a020" stroke-width="0.6" stroke-linejoin="round"/></g>
<polygon points="718.9,126.9 714.4,127.3 715.7,131.6 712.3,128.7 710.1,132.7 709.7,128.2 705.4,129.5 708.3,126.1 704.3,123.9 708.8,123.5 707.5,119.2 710.9,122.1 713.1,118.1 713.5,122.6 717.8,121.3 714.9,124.7" fill="url(#gStar)" stroke="#f08820" stroke-width="0.4"/>
<rect x="725" y="104" width="1" height="30" fill="#b2b2b2"/>
<path d="M734 112.6 L745.4 107 L748.4 109.4 L763.4 104.6 L759.6 124.6 L738.6 133 Z" fill="#e2e2e2" stroke="#d4d4d4" stroke-width="0.8"/>
<path d="M738.6 133 L744.6 117.2 L763 110 L759.6 124.6 Z" fill="#ebebeb" stroke="#d6d6d6" stroke-width="0.6"/>
<path d="M739.4 107.6 Q745.4 103.8 750.6 107.6 L752.6 106 L751.6 113.6 L744.6 112.4 L747 110.6 Q744.4 109 741.6 110.6 Z" fill="#cdcdcd"/>
<circle cx="786.4" cy="119.2" r="14.2" fill="#d8d8d8" stroke="#d0d0d0" stroke-width="0.8"/>
<path d="M772.6 118 A13.8 13.8 0 0 1 800.2 118 Q786 112 772.6 118 Z" fill="#e0e0e0"/>
<path d="M778.6 127.6 Q776.4 116 778.8 110.6 Q786 111.6 796.6 116 L796.8 121.4 Q789 119.6 787.6 119.4 L789.4 116.4 Q783 117.6 781.8 120 Q780.4 124 778.6 127.6 Z" fill="#ececec"/>
<rect x="807" y="104" width="1" height="30" fill="#b2b2b2"/>
<g transform="translate(816.8,104.8)"><path d="M0.2 10.6 L12 1.6 L13.6 0 L19.4 0.2 L20.8 5.6 L24.4 7 L22.4 20 L4 27.8 Z" fill="url(#gFoldB)" stroke="#b89414" stroke-width="0.6" stroke-linejoin="round"/><path d="M4 27.8 L9 15.6 L26.4 5.6 L23.6 19.6 L20 22 Z" fill="url(#gFold)" stroke="#c8a020" stroke-width="0.6" stroke-linejoin="round"/></g>
<path d="M818.6 119.6 L841.8 106.2 L843.4 110.4 L825 120.8 L821.6 130 Z" fill="#f4f4f4" stroke="#d8d8d8" stroke-width="0.5"/>
<path d="M818.4 119.4 L842.6 105.4" stroke="#e8141c" stroke-width="2.7" stroke-dasharray="0.1 4" stroke-linecap="round"/>
<rect x="861.5" y="100.5" width="37" height="37" fill="#e3eefa" stroke="#0f7bd6" stroke-width="1"/>
<rect x="868.8" y="108.4" width="23.4" height="22.8" rx="3.6" fill="#b4b4b4"/>
<rect x="870.4" y="126" width="20.2" height="4.4" rx="2" fill="#6e6e6e"/>
<rect x="870" y="109.4" width="21" height="19.4" rx="3" fill="url(#gGrayBtn)"/>
<rect x="872.4" y="112" width="16.2" height="14.4" rx="1" fill="#eeeeee"/>
<path d="M874.8 117.6 L879.2 122.4 L887.4 110" fill="none" stroke="#000" stroke-width="3" stroke-linecap="round" stroke-linejoin="round"/>
<path d="M908 107.6 L919.6 107.6 L925.6 113.6 L925.6 130.2 L908 130.2 Z" fill="url(#gPage)" stroke="#c0c0c0" stroke-width="1" stroke-linejoin="round"/>
<path d="M919.6 107.6 L919.6 113.6 L925.6 113.6 Z" fill="#f4f4f4" stroke="#c0c0c0" stroke-width="0.8" stroke-linejoin="round"/>
<rect x="905.6" y="105.6" width="24" height="27" fill="none" stroke="#e81a1a" stroke-width="1.25"/>
<rect x="922" y="122.8" width="11.4" height="11.4" rx="1.5" fill="#8c8c8c"/>
<rect x="923.5" y="124.3" width="8.4" height="8.4" fill="#e8e8e8"/>
<path d="M924.5 128.0 L926.8 130.8 L931 124.8" fill="none" stroke="#000" stroke-width="2"/>
<path d="M945.4 107.2 L951 121.6 L950.2 131.4 Q952.4 134 954.8 131.4 L955.6 122.6 L969.2 110.2 Z" fill="url(#gFunnel)" stroke="#8a8a8a" stroke-width="0.8" stroke-linejoin="round"/>
<ellipse cx="957.3" cy="108.4" rx="12" ry="2.9" transform="rotate(7 957.3 108.4)" fill="#c6c6c6" stroke="#8e8e8e" stroke-width="0.8"/>
<ellipse cx="956.6" cy="108.5" rx="8.6" ry="1.4" transform="rotate(7 957.3 108.4)" fill="#d8d8d8"/>
<rect x="960.2" y="122.6" width="11.4" height="11.4" rx="1.5" fill="#8c8c8c"/>
<rect x="961.7" y="124.1" width="8.4" height="8.4" fill="#e8e8e8"/>
<path d="M962.7 127.8 L965.0 130.6 L969.2 124.6" fill="none" stroke="#000" stroke-width="2"/>
<rect x="977" y="104" width="1" height="30" fill="#b2b2b2"/>
<path d="M991.8 107.6 L1003.3 107.6 L1008.8 113.1 L1008.8 130.4 L991.8 130.4 Z" fill="url(#gPage)" stroke="#b8b8b8" stroke-width="1" stroke-linejoin="round"/>
<path d="M1003.3 107.6 L1003.3 113.1 L1008.8 113.1 Z" fill="#f4f4f4" stroke="#b8b8b8" stroke-width="0.8" stroke-linejoin="round"/>
<path d="M1008.8 113 L1008.8 124 M1003.4 113.2 L1008.8 113.2" stroke="#8a8a8a" stroke-width="1.2" fill="none"/>
<path d="M992 130.6 L1004.4 130.6" stroke="#8c8c8c" stroke-width="1.3"/>
<rect x="1004.3" y="123.7" width="11.2" height="10" rx="1" fill="#9a9a9a"/><rect x="1005.6" y="125" width="8.6" height="7" fill="#e2e2e2"/><rect x="1005.6" y="128.6" width="8.6" height="3.4" fill="#d0d0d0"/>
<path d="M195 148 L204.4 148 L199.7 153 Z" fill="#fff"/>
<g fill="#fff"><rect x="213.4" y="144.4" width="1.2" height="6.6"/><rect x="213.4" y="144.4" width="4.6" height="1.2"/><rect x="215.6" y="144.4" width="2.4" height="6.6"/><rect x="211" y="150.7" width="9" height="2.1"/><rect x="214.8" y="152.6" width="1.6" height="3.4"/></g>
<path d="M228.4 145.6 L236.6 153.8 M236.6 145.6 L228.4 153.8" stroke="#fff" stroke-width="2" fill="none"/>
<path d="M970.4 148 L979 148 L974.7 152.4 Z" fill="#1e1e1e"/>
<g fill="#1e1e1e"><rect x="988.9" y="144.3" width="1" height="7"/><rect x="988.9" y="144.3" width="3.8" height="1"/><rect x="990.7" y="144.3" width="2" height="7"/><rect x="986.6" y="151.0" width="7.6" height="1.2"/><rect x="989.9" y="152.10000000000002" width="1" height="3.2"/></g>
<path d="M1003.2 145.6 L1010.8 153.2 M1010.8 145.6 L1003.2 153.2" stroke="#1e1e1e" stroke-width="1.25" fill="none"/>
<path d="M970.4 591 L979 591 L974.7 595.4 Z" fill="#1e1e1e"/>
<g fill="#1e1e1e"><rect x="988.9" y="587.3" width="1" height="7"/><rect x="988.9" y="587.3" width="3.8" height="1"/><rect x="990.7" y="587.3" width="2" height="7"/><rect x="986.6" y="594.0" width="7.6" height="1.2"/><rect x="989.9" y="595.0999999999999" width="1" height="3.2"/></g>
<path d="M1003.2 588.6 L1010.8 596.2 M1010.8 588.6 L1003.2 596.2" stroke="#1e1e1e" stroke-width="1.25" fill="none"/>
<rect x="8.5" y="166.5" width="8" height="8" rx="1" fill="#fafafa" stroke="#919191" stroke-width="1"/><rect x="10" y="170" width="5" height="1" fill="#3c4a8c"/>
<path d="M18 170.5 L24 170.5" stroke="#808080" stroke-width="1" stroke-dasharray="1 1" shape-rendering="crispEdges"/>
<path d="M31.5 178 L31.5 184" stroke="#808080" stroke-width="1" stroke-dasharray="1 1" shape-rendering="crispEdges"/>
<path d="M37 188.5 L44 188.5" stroke="#808080" stroke-width="1" stroke-dasharray="1 1" shape-rendering="crispEdges"/>
<rect x="27.5" y="184.5" width="8" height="8" rx="1" fill="#fafafa" stroke="#919191" stroke-width="1"/><rect x="29" y="188" width="5" height="1" fill="#3c4a8c"/><rect x="31" y="186" width="1" height="5" fill="#3c4a8c"/>
<path d="M24.6 165 L26 163.6 L31 163.6 L32 165 L38.4 165 L38.4 168 L24.6 168 Z" fill="#f6d078" stroke="#c4801c" stroke-width="0.8"/>
<path d="M24.4 174.6 L26.6 167.6 L40 167.6 L37.6 174.6 Z" fill="#f8c860" stroke="#cc7c14" stroke-width="0.9"/>
<path d="M24.6 174.4 L24.6 166" stroke="#c88a20" stroke-width="0.8"/>
<path d="M27 172.6 L37.4 172.6" stroke="#e8a030" stroke-width="1.3"/>
<path d="M44.6 180.6 L52 180.6 L55.6 184 L55.6 193.6 L44.6 193.6 Z" fill="#fbfbff" stroke="#2c3c84" stroke-width="1.1"/>
<path d="M52 180.6 L52 184 L55.6 184" fill="none" stroke="#2c3c84" stroke-width="0.8"/>
<rect x="46.6" y="188.2" width="7" height="1" fill="#6a6a6a"/><rect x="46.6" y="190.6" width="7" height="1" fill="#6a6a6a"/><rect x="48" y="184.6" width="3" height="2.4" fill="#8a8a9a"/>
<rect x="61.5" y="178.5" width="89" height="17" fill="none" stroke="#000" stroke-width="1" stroke-dasharray="1 1" shape-rendering="crispEdges"/>
<rect x="1044" y="770" width="2" height="2" fill="#a8a8a8"/>
<rect x="1041" y="773" width="2" height="2" fill="#a8a8a8"/>
<rect x="1044" y="773" width="2" height="2" fill="#a8a8a8"/>
<rect x="1038" y="776" width="2" height="2" fill="#a8a8a8"/>
<rect x="1041" y="776" width="2" height="2" fill="#a8a8a8"/>
<rect x="1044" y="776" width="2" height="2" fill="#a8a8a8"/>
<g transform="translate(0.00,0.00) scale(1.0000)" opacity="1.0">
<rect x="283" y="187" width="1" height="5" fill="#555"/>
<path d="M295.9 200.75 L325.9 200.75" stroke="#333" stroke-width="2.3" stroke-dasharray="2.3 0.7 3.5 0.8 1.5 0.6 2.9 0.9"/>
<path d="M295.9 204.80 L308.4 204.80" stroke="#999" stroke-width="1.6" stroke-dasharray="2.3 0.7 3.5 0.8 1.5 0.6 2.9 0.9"/>
<text x="382.8" y="204" font-family="Liberation Sans,Noto Sans CJK JP,sans-serif" font-weight="bold" font-size="4.2" fill="#333" textLength="12" lengthAdjust="spacingAndGlyphs">請求書</text>
<path d="M295.9 210.55 L300 210.55" stroke="#555" stroke-width="1.1" stroke-dasharray="2.3 0.7 3.5 0.8 1.5 0.6 2.9 0.9"/>
<path d="M295.9 213.80 L322 213.80" stroke="#666" stroke-width="1.6" stroke-dasharray="2.3 0.7 3.5 0.8 1.5 0.6 2.9 0.9"/>
<path d="M295.9 217.25 L322.9 217.25" stroke="#666" stroke-width="1.7" stroke-dasharray="2.3 0.7 3.5 0.8 1.5 0.6 2.9 0.9"/>
<path d="M381.1 211.90 L394.8 211.90" stroke="#555" stroke-width="1.8" stroke-dasharray="2.3 0.7 3.5 0.8 1.5 0.6 2.9 0.9"/>
<path d="M386.2 215.05 L394.8 215.05" stroke="#777" stroke-width="1.5" stroke-dasharray="2.3 0.7 3.5 0.8 1.5 0.6 2.9 0.9"/>
<path d="M295.9 220.95 L300 220.95" stroke="#333" stroke-width="1.3" stroke-dasharray="2.3 0.7 3.5 0.8 1.5 0.6 2.9 0.9"/>
<path d="M348.2 220.95 L354.6 220.95" stroke="#333" stroke-width="1.3" stroke-dasharray="2.3 0.7 3.5 0.8 1.5 0.6 2.9 0.9"/>
<path d="M295.9 224.05 L307.1 224.05" stroke="#444" stroke-width="1.7" stroke-dasharray="2.3 0.7 3.5 0.8 1.5 0.6 2.9 0.9"/>
<path d="M348.2 224.05 L359 224.05" stroke="#444" stroke-width="1.7" stroke-dasharray="2.3 0.7 3.5 0.8 1.5 0.6 2.9 0.9"/>
<path d="M295.9 227.75 L301 227.75" stroke="#888" stroke-width="1.5" stroke-dasharray="2.3 0.7 3.5 0.8 1.5 0.6 2.9 0.9"/>
<path d="M348.2 227.75 L353.5 227.75" stroke="#888" stroke-width="1.5" stroke-dasharray="2.3 0.7 3.5 0.8 1.5 0.6 2.9 0.9"/>
<path d="M295.9 231.10 L300 231.10" stroke="#666" stroke-width="1.2" stroke-dasharray="2.3 0.7 3.5 0.8 1.5 0.6 2.9 0.9"/>
<path d="M348.2 231.10 L352 231.10" stroke="#666" stroke-width="1.2" stroke-dasharray="2.3 0.7 3.5 0.8 1.5 0.6 2.9 0.9"/>
<path d="M295.9 234.40 L320.8 234.40" stroke="#666" stroke-width="1.2" stroke-dasharray="2.3 0.7 3.5 0.8 1.5 0.6 2.9 0.9"/>
<path d="M348.2 234.40 L374 234.40" stroke="#666" stroke-width="1.2" stroke-dasharray="2.3 0.7 3.5 0.8 1.5 0.6 2.9 0.9"/>
<path d="M295.9 237.75 L308.9 237.75" stroke="#777" stroke-width="1.3" stroke-dasharray="2.3 0.7 3.5 0.8 1.5 0.6 2.9 0.9"/>
<path d="M348.2 237.75 L361 237.75" stroke="#777" stroke-width="1.3" stroke-dasharray="2.3 0.7 3.5 0.8 1.5 0.6 2.9 0.9"/>
<path d="M295.9 244.30 L315 244.30" stroke="#666" stroke-width="1.4" stroke-dasharray="2.3 0.7 3.5 0.8 1.5 0.6 2.9 0.9"/>
<path d="M295.9 247.45 L386.2 247.45" stroke="#8a8a8a" stroke-width="1.1" stroke-dasharray="2.3 0.7 3.5 0.8 1.5 0.6 2.9 0.9"/>
<rect x="294.3" y="256.2" width="101.1" height="0.6" fill="#999999"/>
<rect x="294.3" y="262.9" width="101.1" height="0.7" fill="#a0a0a0"/>
<path d="M294.3 263.90 L294.90000000000003 263.90" stroke="#999999" stroke-width="15.4" stroke-dasharray="2.3 0.7 3.5 0.8 1.5 0.6 2.9 0.9"/>
<path d="M333.5 263.90 L334.1 263.90" stroke="#999999" stroke-width="15.4" stroke-dasharray="2.3 0.7 3.5 0.8 1.5 0.6 2.9 0.9"/>
<path d="M382.6 263.90 L383.20000000000005 263.90" stroke="#999999" stroke-width="15.4" stroke-dasharray="2.3 0.7 3.5 0.8 1.5 0.6 2.9 0.9"/>
<path d="M395.2 263.90 L395.8 263.90" stroke="#999999" stroke-width="15.4" stroke-dasharray="2.3 0.7 3.5 0.8 1.5 0.6 2.9 0.9"/>
<path d="M353.3 265.50 L353.9 265.50" stroke="#aaa" stroke-width="4.2" stroke-dasharray="2.3 0.7 3.5 0.8 1.5 0.6 2.9 0.9"/>
<path d="M299 260.05 L308.9 260.05" stroke="#3c3c3c" stroke-width="1.7" stroke-dasharray="2.3 0.7 3.5 0.8 1.5 0.6 2.9 0.9"/>
<path d="M318.8 260.05 L328 260.05" stroke="#3c3c3c" stroke-width="1.7" stroke-dasharray="2.3 0.7 3.5 0.8 1.5 0.6 2.9 0.9"/>
<path d="M340.5 260.05 L345.9 260.05" stroke="#3c3c3c" stroke-width="1.7" stroke-dasharray="2.3 0.7 3.5 0.8 1.5 0.6 2.9 0.9"/>
<path d="M357.1 260.05 L364.8 260.05" stroke="#3c3c3c" stroke-width="1.7" stroke-dasharray="2.3 0.7 3.5 0.8 1.5 0.6 2.9 0.9"/>
<path d="M385.2 260.05 L392.9 260.05" stroke="#3c3c3c" stroke-width="1.7" stroke-dasharray="2.3 0.7 3.5 0.8 1.5 0.6 2.9 0.9"/>
<path d="M368.9 258.80 L380.1 258.80" stroke="#555" stroke-width="1.6" stroke-dasharray="2.3 0.7 3.5 0.8 1.5 0.6 2.9 0.9"/>
<path d="M384.6 266.40 L392 266.40" stroke="#666" stroke-width="1.4" stroke-dasharray="2.3 0.7 3.5 0.8 1.5 0.6 2.9 0.9"/>
<path d="M384.6 269.85 L390 269.85" stroke="#666" stroke-width="1.5" stroke-dasharray="2.3 0.7 3.5 0.8 1.5 0.6 2.9 0.9"/>
<rect x="294.3" y="275.2" width="101.1" height="0.6" fill="#999999"/>
<rect x="294.3" y="280.3" width="101.1" height="0.6" fill="#999999"/>
<rect x="294.3" y="285.1" width="101.1" height="0.6" fill="#999999"/>
<rect x="294.3" y="303.2" width="101.1" height="0.6" fill="#999999"/>
<rect x="294.3" y="308.1" width="101.1" height="0.6" fill="#999999"/>
<rect x="294.3" y="313.2" width="101.1" height="0.6" fill="#999999"/>
<path d="M294.3 296.40 L294.90000000000003 296.40" stroke="#999999" stroke-width="42.4" stroke-dasharray="2.3 0.7 3.5 0.8 1.5 0.6 2.9 0.9"/>
<path d="M313.5 296.40 L314.1 296.40" stroke="#999999" stroke-width="42.4" stroke-dasharray="2.3 0.7 3.5 0.8 1.5 0.6 2.9 0.9"/>
<path d="M370.1 296.40 L370.70000000000005 296.40" stroke="#999999" stroke-width="42.4" stroke-dasharray="2.3 0.7 3.5 0.8 1.5 0.6 2.9 0.9"/>
<path d="M385.2 306.40 L385.8 306.40" stroke="#999999" stroke-width="62.4" stroke-dasharray="2.3 0.7 3.5 0.8 1.5 0.6 2.9 0.9"/>
<path d="M395.2 306.40 L395.8 306.40" stroke="#999999" stroke-width="62.4" stroke-dasharray="2.3 0.7 3.5 0.8 1.5 0.6 2.9 0.9"/>
<path d="M302.5 278.30 L306 278.30" stroke="#3c3c3c" stroke-width="1.6" stroke-dasharray="2.3 0.7 3.5 0.8 1.5 0.6 2.9 0.9"/>
<path d="M339.9 278.30 L344.1 278.30" stroke="#3c3c3c" stroke-width="1.6" stroke-dasharray="2.3 0.7 3.5 0.8 1.5 0.6 2.9 0.9"/>
<path d="M376 278.30 L379.8 278.30" stroke="#3c3c3c" stroke-width="1.6" stroke-dasharray="2.3 0.7 3.5 0.8 1.5 0.6 2.9 0.9"/>
<path d="M389 278.30 L391.8 278.30" stroke="#3c3c3c" stroke-width="1.6" stroke-dasharray="2.3 0.7 3.5 0.8 1.5 0.6 2.9 0.9"/>
<path d="M316 282.90 L333.9 282.90" stroke="#999" stroke-width="1.4" stroke-dasharray="2.3 0.7 3.5 0.8 1.5 0.6 2.9 0.9"/>
<path d="M380.1 320.20 L383.9 320.20" stroke="#777" stroke-width="1.2" stroke-dasharray="2.3 0.7 3.5 0.8 1.5 0.6 2.9 0.9"/>
<path d="M377.9 325.05 L383.9 325.05" stroke="#444" stroke-width="1.7" stroke-dasharray="2.3 0.7 3.5 0.8 1.5 0.6 2.9 0.9"/>
<path d="M373.1 330.20 L383.9 330.20" stroke="#555" stroke-width="1.6" stroke-dasharray="2.3 0.7 3.5 0.8 1.5 0.6 2.9 0.9"/>
<path d="M380.1 335.20 L383.9 335.20" stroke="#666" stroke-width="1.4" stroke-dasharray="2.3 0.7 3.5 0.8 1.5 0.6 2.9 0.9"/>
<rect x="385.2" y="327.2" width="10.2" height="0.6" fill="#999999"/>
<path d="M294.6 342.10 L339.9 342.10" stroke="#777" stroke-width="1.6" stroke-dasharray="2.3 0.7 3.5 0.8 1.5 0.6 2.9 0.9"/>
<path d="M294.6 345.65 L364.8 345.65" stroke="#777" stroke-width="1.7" stroke-dasharray="2.3 0.7 3.5 0.8 1.5 0.6 2.9 0.9"/>
</g>
<g transform="translate(202.88,579.95) scale(0.2195)" opacity="0.9">
<rect x="283" y="187" width="1" height="5" fill="#555"/>
<path d="M295.9 200.75 L325.9 200.75" stroke="#333" stroke-width="2.3" stroke-dasharray="2.3 0.7 3.5 0.8 1.5 0.6 2.9 0.9"/>
<path d="M295.9 204.80 L308.4 204.80" stroke="#999" stroke-width="1.6" stroke-dasharray="2.3 0.7 3.5 0.8 1.5 0.6 2.9 0.9"/>
<text x="382.8" y="204" font-family="Liberation Sans,Noto Sans CJK JP,sans-serif" font-weight="bold" font-size="4.2" fill="#333" textLength="12" lengthAdjust="spacingAndGlyphs">請求書</text>
<path d="M295.9 210.55 L300 210.55" stroke="#555" stroke-width="1.1" stroke-dasharray="2.3 0.7 3.5 0.8 1.5 0.6 2.9 0.9"/>
<path d="M295.9 213.80 L322 213.80" stroke="#666" stroke-width="1.6" stroke-dasharray="2.3 0.7 3.5 0.8 1.5 0.6 2.9 0.9"/>
<path d="M295.9 217.25 L322.9 217.25" stroke="#666" stroke-width="1.7" stroke-dasharray="2.3 0.7 3.5 0.8 1.5 0.6 2.9 0.9"/>
<path d="M381.1 211.90 L394.8 211.90" stroke="#555" stroke-width="1.8" stroke-dasharray="2.3 0.7 3.5 0.8 1.5 0.6 2.9 0.9"/>
<path d="M386.2 215.05 L394.8 215.05" stroke="#777" stroke-width="1.5" stroke-dasharray="2.3 0.7 3.5 0.8 1.5 0.6 2.9 0.9"/>
<path d="M295.9 220.95 L300 220.95" stroke="#333" stroke-width="1.3" stroke-dasharray="2.3 0.7 3.5 0.8 1.5 0.6 2.9 0.9"/>
<path d="M348.2 220.95 L354.6 220.95" stroke="#333" stroke-width="1.3" stroke-dasharray="2.3 0.7 3.5 0.8 1.5 0.6 2.9 0.9"/>
<path d="M295.9 224.05 L307.1 224.05" stroke="#444" stroke-width="1.7" stroke-dasharray="2.3 0.7 3.5 0.8 1.5 0.6 2.9 0.9"/>
<path d="M348.2 224.05 L359 224.05" stroke="#444" stroke-width="1.7" stroke-dasharray="2.3 0.7 3.5 0.8 1.5 0.6 2.9 0.9"/>
<path d="M295.9 227.75 L301 227.75" stroke="#888" stroke-width="1.5" stroke-dasharray="2.3 0.7 3.5 0.8 1.5 0.6 2.9 0.9"/>
<path d="M348.2 227.75 L353.5 227.75" stroke="#888" stroke-width="1.5" stroke-dasharray="2.3 0.7 3.5 0.8 1.5 0.6 2.9 0.9"/>
<path d="M295.9 231.10 L300 231.10" stroke="#666" stroke-width="1.2" stroke-dasharray="2.3 0.7 3.5 0.8 1.5 0.6 2.9 0.9"/>
<path d="M348.2 231.10 L352 231.10" stroke="#666" stroke-width="1.2" stroke-dasharray="2.3 0.7 3.5 0.8 1.5 0.6 2.9 0.9"/>
<path d="M295.9 234.40 L320.8 234.40" stroke="#666" stroke-width="1.2" stroke-dasharray="2.3 0.7 3.5 0.8 1.5 0.6 2.9 0.9"/>
<path d="M348.2 234.40 L374 234.40" stroke="#666" stroke-width="1.2" stroke-dasharray="2.3 0.7 3.5 0.8 1.5 0.6 2.9 0.9"/>
<path d="M295.9 237.75 L308.9 237.75" stroke="#777" stroke-width="1.3" stroke-dasharray="2.3 0.7 3.5 0.8 1.5 0.6 2.9 0.9"/>
<path d="M348.2 237.75 L361 237.75" stroke="#777" stroke-width="1.3" stroke-dasharray="2.3 0.7 3.5 0.8 1.5 0.6 2.9 0.9"/>
<path d="M295.9 244.30 L315 244.30" stroke="#666" stroke-width="1.4" stroke-dasharray="2.3 0.7 3.5 0.8 1.5 0.6 2.9 0.9"/>
<path d="M295.9 247.45 L386.2 247.45" stroke="#8a8a8a" stroke-width="1.1" stroke-dasharray="2.3 0.7 3.5 0.8 1.5 0.6 2.9 0.9"/>
<rect x="294.3" y="256.2" width="101.1" height="0.6" fill="#999999"/>
<rect x="294.3" y="262.9" width="101.1" height="0.7" fill="#a0a0a0"/>
<path d="M294.3 263.90 L294.90000000000003 263.90" stroke="#999999" stroke-width="15.4" stroke-dasharray="2.3 0.7 3.5 0.8 1.5 0.6 2.9 0.9"/>
<path d="M333.5 263.90 L334.1 263.90" stroke="#999999" stroke-width="15.4" stroke-dasharray="2.3 0.7 3.5 0.8 1.5 0.6 2.9 0.9"/>
<path d="M382.6 263.90 L383.20000000000005 263.90" stroke="#999999" stroke-width="15.4" stroke-dasharray="2.3 0.7 3.5 0.8 1.5 0.6 2.9 0.9"/>
<path d="M395.2 263.90 L395.8 263.90" stroke="#999999" stroke-width="15.4" stroke-dasharray="2.3 0.7 3.5 0.8 1.5 0.6 2.9 0.9"/>
<path d="M353.3 265.50 L353.9 265.50" stroke="#aaa" stroke-width="4.2" stroke-dasharray="2.3 0.7 3.5 0.8 1.5 0.6 2.9 0.9"/>
<path d="M299 260.05 L308.9 260.05" stroke="#3c3c3c" stroke-width="1.7" stroke-dasharray="2.3 0.7 3.5 0.8 1.5 0.6 2.9 0.9"/>
<path d="M318.8 260.05 L328 260.05" stroke="#3c3c3c" stroke-width="1.7" stroke-dasharray="2.3 0.7 3.5 0.8 1.5 0.6 2.9 0.9"/>
<path d="M340.5 260.05 L345.9 260.05" stroke="#3c3c3c" stroke-width="1.7" stroke-dasharray="2.3 0.7 3.5 0.8 1.5 0.6 2.9 0.9"/>
<path d="M357.1 260.05 L364.8 260.05" stroke="#3c3c3c" stroke-width="1.7" stroke-dasharray="2.3 0.7 3.5 0.8 1.5 0.6 2.9 0.9"/>
<path d="M385.2 260.05 L392.9 260.05" stroke="#3c3c3c" stroke-width="1.7" stroke-dasharray="2.3 0.7 3.5 0.8 1.5 0.6 2.9 0.9"/>
<path d="M368.9 258.80 L380.1 258.80" stroke="#555" stroke-width="1.6" stroke-dasharray="2.3 0.7 3.5 0.8 1.5 0.6 2.9 0.9"/>
<path d="M384.6 266.40 L392 266.40" stroke="#666" stroke-width="1.4" stroke-dasharray="2.3 0.7 3.5 0.8 1.5 0.6 2.9 0.9"/>
<path d="M384.6 269.85 L390 269.85" stroke="#666" stroke-width="1.5" stroke-dasharray="2.3 0.7 3.5 0.8 1.5 0.6 2.9 0.9"/>
<rect x="294.3" y="275.2" width="101.1" height="0.6" fill="#999999"/>
<rect x="294.3" y="280.3" width="101.1" height="0.6" fill="#999999"/>
<rect x="294.3" y="285.1" width="101.1" height="0.6" fill="#999999"/>
<rect x="294.3" y="303.2" width="101.1" height="0.6" fill="#999999"/>
<rect x="294.3" y="308.1" width="101.1" height="0.6" fill="#999999"/>
<rect x="294.3" y="313.2" width="101.1" height="0.6" fill="#999999"/>
<path d="M294.3 296.40 L294.90000000000003 296.40" stroke="#999999" stroke-width="42.4" stroke-dasharray="2.3 0.7 3.5 0.8 1.5 0.6 2.9 0.9"/>
<path d="M313.5 296.40 L314.1 296.40" stroke="#999999" stroke-width="42.4" stroke-dasharray="2.3 0.7 3.5 0.8 1.5 0.6 2.9 0.9"/>
<path d="M370.1 296.40 L370.70000000000005 296.40" stroke="#999999" stroke-width="42.4" stroke-dasharray="2.3 0.7 3.5 0.8 1.5 0.6 2.9 0.9"/>
<path d="M385.2 306.40 L385.8 306.40" stroke="#999999" stroke-width="62.4" stroke-dasharray="2.3 0.7 3.5 0.8 1.5 0.6 2.9 0.9"/>
<path d="M395.2 306.40 L395.8 306.40" stroke="#999999" stroke-width="62.4" stroke-dasharray="2.3 0.7 3.5 0.8 1.5 0.6 2.9 0.9"/>
<path d="M302.5 278.30 L306 278.30" stroke="#3c3c3c" stroke-width="1.6" stroke-dasharray="2.3 0.7 3.5 0.8 1.5 0.6 2.9 0.9"/>
<path d="M339.9 278.30 L344.1 278.30" stroke="#3c3c3c" stroke-width="1.6" stroke-dasharray="2.3 0.7 3.5 0.8 1.5 0.6 2.9 0.9"/>
<path d="M376 278.30 L379.8 278.30" stroke="#3c3c3c" stroke-width="1.6" stroke-dasharray="2.3 0.7 3.5 0.8 1.5 0.6 2.9 0.9"/>
<path d="M389 278.30 L391.8 278.30" stroke="#3c3c3c" stroke-width="1.6" stroke-dasharray="2.3 0.7 3.5 0.8 1.5 0.6 2.9 0.9"/>
<path d="M316 282.90 L333.9 282.90" stroke="#999" stroke-width="1.4" stroke-dasharray="2.3 0.7 3.5 0.8 1.5 0.6 2.9 0.9"/>
<path d="M380.1 320.20 L383.9 320.20" stroke="#777" stroke-width="1.2" stroke-dasharray="2.3 0.7 3.5 0.8 1.5 0.6 2.9 0.9"/>
<path d="M377.9 325.05 L383.9 325.05" stroke="#444" stroke-width="1.7" stroke-dasharray="2.3 0.7 3.5 0.8 1.5 0.6 2.9 0.9"/>
<path d="M373.1 330.20 L383.9 330.20" stroke="#555" stroke-width="1.6" stroke-dasharray="2.3 0.7 3.5 0.8 1.5 0.6 2.9 0.9"/>
<path d="M380.1 335.20 L383.9 335.20" stroke="#666" stroke-width="1.4" stroke-dasharray="2.3 0.7 3.5 0.8 1.5 0.6 2.9 0.9"/>
<rect x="385.2" y="327.2" width="10.2" height="0.6" fill="#999999"/>
<path d="M294.6 342.10 L339.9 342.10" stroke="#777" stroke-width="1.6" stroke-dasharray="2.3 0.7 3.5 0.8 1.5 0.6 2.9 0.9"/>
<path d="M294.6 345.65 L364.8 345.65" stroke="#777" stroke-width="1.7" stroke-dasharray="2.3 0.7 3.5 0.8 1.5 0.6 2.9 0.9"/>
</g>
</svg>
<div class="t" style="left:29.74px;top:-4.3px;font-size:12px;color:#000;transform:scaleX(0.9564);">Kodak Capture Pro</div>
<div class="t" style="left:129.61px;top:-4.3px;font-size:12px;color:#000;transform:scaleX(1.0308);"><span class="k" style="width:43.20px;font-size:13.60px;transform:scaleX(0.6353)">トライアル</span>版</div>
<div class="t" style="left:192.70px;top:-4.3px;font-size:12px;color:#000;transform:scaleX(0.9000);">-</div>
<div class="t" style="left:199.60px;top:-4.3px;font-size:12px;color:#000;transform:scaleX(0.9845);">標準<span class="k" style="width:34.56px;font-size:13.60px;transform:scaleX(0.6353)">スキャン</span></div>
<div class="t" style="left:19.33px;top:23.7px;font-size:12px;color:#000;transform:scaleX(0.9735);"><span class="k" style="width:34.56px;font-size:13.60px;transform:scaleX(0.6353)">ファイル</span></div>
<div class="t" style="left:72.90px;top:24.7px;font-size:12px;color:#000;transform:scaleX(0.9654);"><span class="k" style="width:25.92px;font-size:13.60px;transform:scaleX(0.6353)">バッチ</span></div>
<div class="t" style="left:117.40px;top:24.7px;font-size:12px;color:#000;transform:scaleX(0.9708);">表示</div>
<div class="t" style="left:157.53px;top:24.2px;font-size:12px;color:#000;transform:scaleX(1.0727);"><span class="k" style="width:34.56px;font-size:13.60px;transform:scaleX(0.6353)">スキャン</span></div>
<div class="t" style="left:209.96px;top:24.2px;font-size:12px;color:#000;transform:scaleX(1.0184);"><span class="k" style="width:51.84px;font-size:13.60px;transform:scaleX(0.6353)">ドキュメント</span></div>
<div class="t" style="left:280.80px;top:24.7px;font-size:12px;color:#000;transform:scaleX(0.9458);">編集</div>
<div class="t" style="left:321.71px;top:24.2px;font-size:12px;color:#000;transform:scaleX(0.9920);"><span class="k" style="width:25.92px;font-size:13.60px;transform:scaleX(0.6353)">ツール</span></div>
<div class="t" style="left:366.45px;top:25.2px;font-size:12px;color:#000;transform:scaleX(1.0500);"><span class="k" style="width:51.84px;font-size:13.60px;transform:scaleX(0.6353)">インデックス</span></div>
<div class="t" style="left:438.00px;top:25.2px;font-size:12px;color:#000;transform:scaleX(1.1038);"><span class="k" style="width:25.92px;font-size:13.60px;transform:scaleX(0.6353)">ヘルプ</span></div>
<div class="t" style="left:96.11px;top:56.8px;font-size:12px;color:#000;transform:scaleX(0.9935);">白黒 - 200dpi -</div>
<div class="t" style="left:177.31px;top:56.8px;font-size:12px;color:#000;transform:scaleX(0.9929);"><span class="k" style="width:30.96px;font-size:12px;transform:scaleX(0.86)">すべて</span></div>
<div class="t" style="left:206.90px;top:56.8px;font-size:12px;color:#000;transform:scaleX(0.9292);">保持</div>
<div class="t" style="left:6.70px;top:131.1px;font-size:12px;color:#fff;transform:scaleX(1.0271);"><span class="k" style="width:86.40px;font-size:13.60px;transform:scaleX(0.6353)">バッチエクスプローラ</span></div>
<div class="t" style="left:254.10px;top:131.5px;font-size:12px;color:#1e1e1e;transform:scaleX(1.0009);"><span class="k" style="width:69.12px;font-size:13.60px;transform:scaleX(0.6353)">イメージビューア</span> - <span class="k" style="width:25.92px;font-size:13.60px;transform:scaleX(0.6353)">バッチ</span>：</div>
<div class="t" style="left:374.65px;top:131.5px;font-size:12px;color:#1e1e1e;transform:scaleX(0.9544);">Batch016 -</div>
<div class="t" style="left:432.92px;top:131.5px;font-size:12px;color:#1e1e1e;transform:scaleX(0.9877);"><span class="k" style="width:51.84px;font-size:13.60px;transform:scaleX(0.6353)">ドキュメント</span>：</div>
<div class="t" style="left:500.03px;top:131.5px;font-size:12px;color:#1e1e1e;transform:scaleX(0.5667);">1</div>
<div class="t" style="left:254.00px;top:574.3px;font-size:12px;color:#1e1e1e;transform:scaleX(1.0494);"><span class="k" style="width:77.76px;font-size:13.60px;transform:scaleX(0.6353)">サムネイルビューア</span></div>
<div class="t" style="left:43.76px;top:149.0px;font-size:12px;color:#000;transform:scaleX(0.9701);"><span class="k" style="width:51.84px;font-size:13.60px;transform:scaleX(0.6353)">ドキュメント</span> 1 (1)</div>
<div class="t" style="left:64.80px;top:166.5px;font-size:12px;color:#000;transform:scaleX(0.9722);"><span class="k" style="width:25.92px;font-size:13.60px;transform:scaleX(0.6353)">ページ</span> 1 (1)</div>
<div class="t" style="left:314.63px;top:153.7px;font-size:13px;color:#000;transform:scaleX(1.0698);">1(<span class="k" style="width:28.08px;font-size:14.73px;transform:scaleX(0.6353)">ページ</span> 1)</div>
<div class="t" style="left:507.40px;top:153.7px;font-size:13px;color:#000;transform:scaleX(1.0593);">2(<span class="k" style="width:28.08px;font-size:14.73px;transform:scaleX(0.6353)">ページ</span> 1)</div>
<div class="t" style="left:267.16px;top:593.9px;font-size:13px;color:#000;transform:scaleX(0.8440);">1 - 1</div>
<div class="t" style="left:327.08px;top:593.9px;font-size:13px;color:#000;transform:scaleX(0.9200);">1 - 2</div>
<div class="t" style="left:3.27px;top:751.3px;font-size:12px;color:#000;transform:scaleX(1.0306);"><span class="k" style="width:34.56px;font-size:13.60px;transform:scaleX(0.6353)">イメージ</span>:</div>
<div class="t" style="left:45.40px;top:751.3px;font-size:12px;color:#000;transform:scaleX(0.8750);">835</div>
<div class="t" style="left:66.00px;top:751.3px;font-size:12px;color:#000;transform:scaleX(1.0840);"><span class="k" style="width:25.92px;font-size:13.60px;transform:scaleX(0.6353)">バイト</span></div>
<div class="t" style="left:158.30px;top:751.3px;font-size:12px;color:#000;transform:scaleX(0.9541);"><span class="k" style="width:34.56px;font-size:13.60px;transform:scaleX(0.6353)">ディスク</span>:</div>
<div class="t" style="left:198.60px;top:751.3px;font-size:12px;color:#000;transform:scaleX(0.8934);">326065 MB</div>
<div class="t" style="left:252.97px;top:751.3px;font-size:12px;color:#000;transform:scaleX(1.0333);"><span class="k" style="width:10.32px;font-size:12px;transform:scaleX(0.86)">の</span>空<span class="k" style="width:10.32px;font-size:12px;transform:scaleX(0.86)">き</span></div>
<div class="t" style="left:362.60px;top:750.8px;font-size:12px;color:#000;transform:scaleX(0.9333);"><span class="k" style="width:25.92px;font-size:13.60px;transform:scaleX(0.6353)">バッチ</span>: 1</div>
<div class="t" style="left:401.05px;top:750.8px;font-size:12px;color:#000;transform:scaleX(0.9733);"><span class="k" style="width:51.84px;font-size:13.60px;transform:scaleX(0.6353)">ドキュメント</span>毎; 1</div>
<div class="t" style="left:481.40px;top:750.8px;font-size:12px;color:#000;transform:scaleX(1.0051);"><span class="k" style="width:25.92px;font-size:13.60px;transform:scaleX(0.6353)">ページ</span>; 2</div>
<div class="t" style="left:523.57px;top:750.8px;font-size:12px;color:#000;transform:scaleX(1.0303);"><span class="k" style="width:34.56px;font-size:13.60px;transform:scaleX(0.6353)">イメージ</span></div>
<div class="t" style="left:664.20px;top:750.8px;font-size:12px;color:#000;transform:scaleX(1.0000);"><span class="k" style="width:51.84px;font-size:13.60px;transform:scaleX(0.6353)">ドキュメント</span>:</div>
<div class="t" style="left:723.00px;top:750.8px;font-size:12px;color:#000;transform:scaleX(0.6857);">2</div>
<div class="t" style="left:731.31px;top:750.8px;font-size:12px;color:#000;transform:scaleX(0.9879);"><span class="k" style="width:34.56px;font-size:13.60px;transform:scaleX(0.6353)">イメージ</span></div>
<div class="t" style="left:869.52px;top:751.3px;font-size:12px;color:#000;transform:scaleX(0.9778);"><span class="k" style="width:34.56px;font-size:13.60px;transform:scaleX(0.6353)">フィルタ</span>:</div>
<div class="t" style="left:910.00px;top:751.3px;font-size:12px;color:#000;transform:scaleX(1.0000);"><span class="k" style="width:17.28px;font-size:13.60px;transform:scaleX(0.6353)">オフ</span></div>
<div class="t" style="left:1050.7px;top:145.78px;font-size:12px;color:#2a2a2a;transform:rotate(90deg) scaleX(1.0240);"><span class="k" style="width:51.84px;font-size:13.60px;transform:scaleX(0.6353)">インデックス</span></div>
<div class="t" style="left:1051.2px;top:229.00px;font-size:12px;color:#2a2a2a;transform:rotate(90deg) scaleX(0.9500);">情報</div>
<div id="frame"></div>
</div>

</body></html>
